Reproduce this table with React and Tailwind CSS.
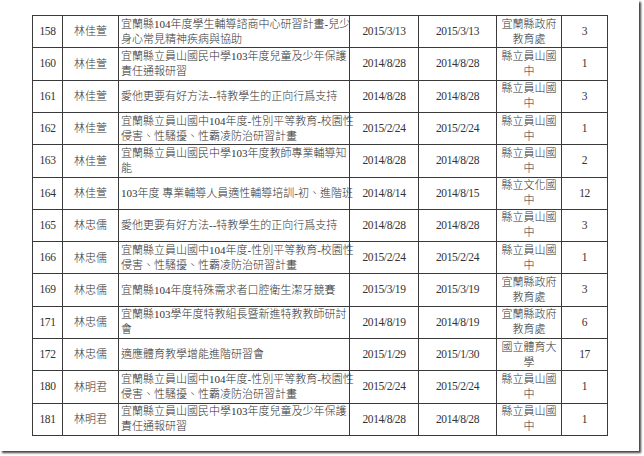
import React from 'react'

// training records table, as photographed
const rows = [
  ['158', '林佳萱', ['宜蘭縣104年度學生輔導諮商中心研習計畫-兒少', '身心常見精神疾病與協助'], '2015/3/13', '2015/3/13', ['宜蘭縣政府', '教育處'], '3'],
  ['160', '林佳萱', ['宜蘭縣立員山國民中學103年度兒童及少年保護', '責任通報研習'], '2014/8/28', '2014/8/28', ['縣立員山國', '中'], '1'],
  ['161', '林佳萱', ['愛他更要有好方法--特教學生的正向行爲支持'], '2014/8/28', '2014/8/28', ['縣立員山國', '中'], '3'],
  ['162', '林佳萱', ['宜蘭縣立員山國中104年度-性別平等教育-校園性', '侵害、性騷擾、性霸凌防治研習計畫'], '2015/2/24', '2015/2/24', ['縣立員山國', '中'], '1'],
  ['163', '林佳萱', ['宜蘭縣立員山國民中學103年度教師專業輔導知', '能'], '2014/8/28', '2014/8/28', ['縣立員山國', '中'], '2'],
  ['164', '林佳萱', ['103年度 專業輔導人員適性輔導培訓-初、進階班'], '2014/8/14', '2014/8/15', ['縣立文化國', '中'], '12'],
  ['165', '林忠儒', ['愛他更要有好方法--特教學生的正向行爲支持'], '2014/8/28', '2014/8/28', ['縣立員山國', '中'], '3'],
  ['166', '林忠儒', ['宜蘭縣立員山國中104年度-性別平等教育-校園性', '侵害、性騷擾、性霸凌防治研習計畫'], '2015/2/24', '2015/2/24', ['縣立員山國', '中'], '1'],
  ['169', '林忠儒', ['宜蘭縣104年度特殊需求者口腔衛生潔牙競賽'], '2015/3/19', '2015/3/19', ['宜蘭縣政府', '教育處'], '3'],
  ['171', '林忠儒', ['宜蘭縣103學年度特教組長暨新進特教教師研討', '會'], '2014/8/19', '2014/8/19', ['宜蘭縣政府', '教育處'], '6'],
  ['172', '林忠儒', ['適應體育教學增能進階研習會'], '2015/1/29', '2015/1/30', ['國立體育大', '學'], '17'],
  ['180', '林明君', ['宜蘭縣立員山國中104年度-性別平等教育-校園性', '侵害、性騷擾、性霸凌防治研習計畫'], '2015/2/24', '2015/2/24', ['縣立員山國', '中'], '1'],
  ['181', '林明君', ['宜蘭縣立員山國民中學103年度兒童及少年保護', '責任通報研習'], '2014/8/28', '2014/8/28', ['縣立員山國', '中'], '1'],
]

const cell = 'border-r border-b border-[#3a3a3a] flex items-center'
const num = 'text-[11.5px] tracking-[-0.4px]'

const Lines = ({ lines }) => (
  <div className="leading-[15px]">
    {lines.map((l, i) => (
      <div key={i} className="whitespace-nowrap">{l}</div>
    ))}
  </div>
)

export default function App() {
  return (
    <div className="w-[644px] h-[456px] bg-white overflow-hidden">
      <div
        className="w-[639px] h-[451px] bg-white shadow-[2px_2px_2px_rgba(0,0,0,0.75)] pl-[32px] pt-[15px] text-[#333] text-[11px] font-light"
        style={{ fontFamily: '"Liberation Serif", "Noto Sans CJK TC", serif' }}
      >
        <div className="grid grid-cols-[30px_56px_231px_69px_78px_65px_46px] grid-rows-[repeat(13,minmax(0,1fr))] h-[421px] w-max border-l border-t border-[#3a3a3a]">
          {rows.map((r) => (
            <React.Fragment key={r[0]}>
              <div className={`${cell} justify-center ${num}`}>{r[0]}</div>
              <div className={`${cell} justify-center`}>{r[1]}</div>
              <div className={`${cell} pl-[2px]`}>
                <Lines lines={r[2]} />
              </div>
              <div className={`${cell} justify-center ${num}`}>{r[3]}</div>
              <div className={`${cell} justify-center ${num}`}>{r[4]}</div>
              <div className={`${cell} justify-center text-center`}>
                <Lines lines={r[5]} />
              </div>
              <div className={`${cell} justify-center ${num}`}>{r[6]}</div>
            </React.Fragment>
          ))}
        </div>
      </div>
    </div>
  )
}
